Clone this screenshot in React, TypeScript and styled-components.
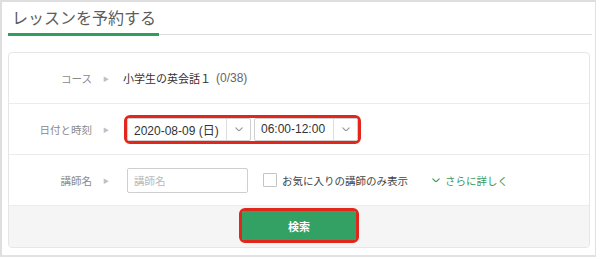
import React, { useState } from 'react';
import styled, { createGlobalStyle } from 'styled-components';

const GlobalStyle = createGlobalStyle`
    html, body {
        margin: 0;
        padding: 0;
        background: #ffffff;
    }
    body {
        font-family: "Liberation Sans", "Noto Sans CJK JP", sans-serif;
        color: #333333;
    }
`;

const Frame = styled.div`
    box-sizing: border-box;
    width: 596px;
    height: 257px;
    border-top: 2px solid #dedede;
    border-left: 2px solid #dedede;
    border-right: 1px solid #e2e2e2;
    border-bottom: 2px solid #e2e2e2;
    background: #ffffff;
    padding: 0 3px 0 6px;
`;

const Header = styled.div`
    display: flex;
    border-bottom: 1px solid #dddddd;
`;

const Title = styled.h2`
    margin: 0 0 -2px 0;
    padding: 3px 3px 4px 4px;
    font-family: "Noto Sans CJK JP", sans-serif;
    font-size: 16px;
    line-height: 24px;
    font-weight: 400;
    color: #5c5c5c;
    border-bottom: 3px solid #2f9e5e;
`;

const Card = styled.div`
    box-sizing: border-box;
    margin: 17px 2px 0 0;
    border: 1px solid #e6e6e6;
    border-radius: 4px;
    overflow: hidden;
`;

const Row = styled.div`
    display: grid;
    grid-template-columns: 113px 1fr;
    align-items: center;
    height: 51px;
    border-bottom: 1px solid #ececec;
    box-sizing: border-box;
`;

const Label = styled.div`
    display: flex;
    justify-content: flex-end;
    align-items: center;
    padding-right: 13px;
    font-family: "Noto Sans CJK JP", sans-serif;
    font-size: 10.5px;
    color: #8a8a8a;
`;

const Arrow = styled.span`
    margin-left: 11px;
    font-size: 6px;
    color: #c0c0c0;
`;

const Cell = styled.div<{ $pad?: number }>`
    display: flex;
    align-items: center;
    padding-left: ${(p) => p.$pad ?? 0}px;
`;

const Value = styled.span`
    font-family: "Noto Sans CJK JP", sans-serif;
    font-size: 11px;
    color: #333333;
`;

const Count = styled.span`
    margin-left: 5px;
    font-family: "Liberation Sans", "Noto Sans CJK JP", sans-serif;
    font-size: 12px;
    color: #666666;
`;

const Highlight = styled.div`
    display: flex;
    gap: 3px;
    border: 3px solid #e2261b;
    border-radius: 6px;
    background: #ffffff;
`;

const Select = styled.div<{ $w: number }>`
    display: flex;
    box-sizing: border-box;
    width: ${(p) => p.$w}px;
    height: 23px;
    border: 1px solid #cfcfcf;
    border-radius: 2px;
    background: #ffffff;
`;

const SelectText = styled.div`
    flex: 1;
    display: flex;
    align-items: center;
    padding-left: 6px;
    font-family: "Liberation Sans", "Noto Sans CJK JP", sans-serif;
    font-size: 12px;
    color: #333333;
    white-space: nowrap;
`;

const SelectButton = styled.div`
    display: flex;
    align-items: center;
    justify-content: center;
    width: 23px;
    border-left: 1px solid #dddddd;
`;

const Input = styled.input`
    box-sizing: border-box;
    width: 121px;
    height: 25px;
    margin: 0;
    padding: 0 6px;
    border: 1px solid #cfcfcf;
    border-radius: 2px;
    font-family: "Noto Sans CJK JP", sans-serif;
    font-size: 10.5px;
    color: #333333;
    outline: none;
    &::placeholder {
        color: #b8b8b8;
    }
`;

const Check = styled.label`
    display: flex;
    align-items: center;
    margin-left: 15px;
    font-family: "Noto Sans CJK JP", sans-serif;
    font-size: 10.5px;
    color: #444444;
    cursor: pointer;
`;

const Box = styled.span<{ $on: boolean }>`
    box-sizing: border-box;
    width: 14px;
    height: 14px;
    margin-right: 5px;
    border: 1px solid #c4c4c4;
    border-radius: 1px;
    background: ${(p) => (p.$on ? '#2f9e5e' : '#ffffff')};
`;

const More = styled.a`
    display: flex;
    align-items: center;
    margin-left: 24px;
    font-family: "Noto Sans CJK JP", sans-serif;
    font-size: 10.5px;
    color: #3a9a5a;
    text-decoration: none;
    cursor: pointer;
    svg {
        margin-right: 5px;
    }
`;

const Footer = styled.div`
    display: flex;
    justify-content: center;
    height: 41px;
    padding-top: 2px;
    box-sizing: border-box;
    background: #f5f5f5;
`;

const ButtonRing = styled.div`
    border: 3px solid #e2261b;
    border-radius: 6px;
    height: 35px;
    box-sizing: border-box;
`;

const SearchButton = styled.button`
    width: 114px;
    height: 29px;
    margin: 0;
    border: none;
    border-radius: 2px;
    background: #32a163;
    color: #ffffff;
    font-family: "Noto Sans CJK JP", sans-serif;
    font-size: 11px;
    font-weight: 700;
    cursor: pointer;
`;

const Chevron = ({ color = '#9a9a9a', size = 8 }: { color?: string; size?: number }) => (
    <svg width={size} height={size * 0.6} viewBox="0 0 10 6" fill="none">
        <path d="M1 1l4 4 4-4" stroke={color} strokeWidth="1.4" strokeLinecap="round" strokeLinejoin="round" />
    </svg>
);

const App = () => {
    const [favOnly, setFavOnly] = useState(false);

    return (
        <>
            <GlobalStyle />
            <Frame>
                <Header>
                    <Title>レッスンを予約する</Title>
                </Header>
                <Card>
                    <Row>
                        <Label>コース<Arrow>▶</Arrow></Label>
                        <Cell $pad={1}>
                            <Value>小学生の英会話１</Value>
                            <Count>(0/38)</Count>
                        </Cell>
                    </Row>
                    <Row>
                        <Label>日付と時刻<Arrow>▶</Arrow></Label>
                        <Cell $pad={2}>
                            <Highlight>
                                <Select $w={124}>
                                    <SelectText>2020-08-09 (日)</SelectText>
                                    <SelectButton><Chevron /></SelectButton>
                                </Select>
                                <Select $w={104}>
                                    <SelectText>06:00-12:00</SelectText>
                                    <SelectButton><Chevron /></SelectButton>
                                </Select>
                            </Highlight>
                        </Cell>
                    </Row>
                    <Row>
                        <Label>講師名<Arrow>▶</Arrow></Label>
                        <Cell $pad={5}>
                            <Input placeholder="講師名" />
                            <Check onClick={() => setFavOnly(!favOnly)}>
                                <Box $on={favOnly} />
                                お気に入りの講師のみ表示
                            </Check>
                            <More>
                                <Chevron color="#3a9a5a" size={8} />
                                さらに詳しく
                            </More>
                        </Cell>
                    </Row>
                    <Footer>
                        <ButtonRing>
                            <SearchButton>検索</SearchButton>
                        </ButtonRing>
                    </Footer>
                </Card>
            </Frame>
        </>
    );
};

export default App;
